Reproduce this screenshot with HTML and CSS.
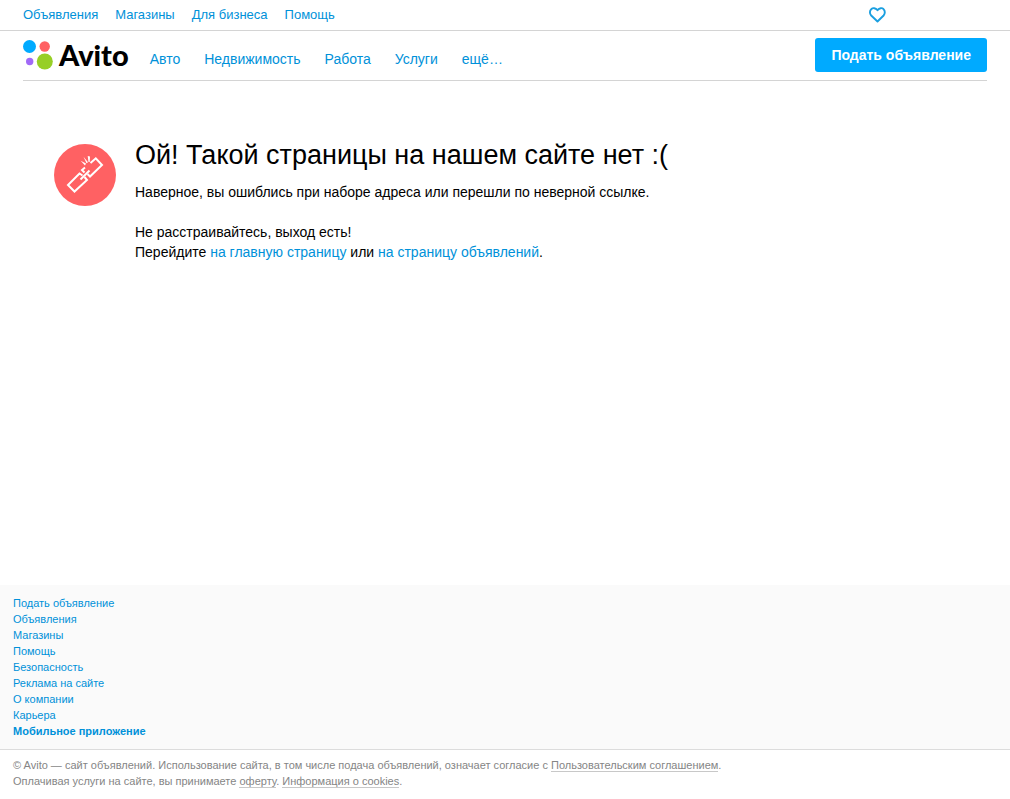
FILE: index.html
```html
<!DOCTYPE html>
<html lang="ru">
<head>
<meta charset="utf-8">
<meta name="viewport" content="width=device-width, initial-scale=1">
<title>Avito — страница не найдена</title>
<link rel="stylesheet" href="styles.css">
</head>
<body>
<header>
  <div class="topbar">
    <nav class="topbar-nav" aria-label="Сервисы">
      <a href="#">Объявления</a>
      <a href="#">Магазины</a>
      <a href="#">Для бизнеса</a>
      <a href="#">Помощь</a>
    </nav>
    <a class="favorites" href="#" aria-label="Избранное">
      <svg width="18" height="16" viewBox="0 0 18 16" aria-hidden="true"><path d="M9.500 14.500L3.200 8.500C1.500 6.700 1.500 3.700 3.200 2.200C4.900 .6 7.500 .8 9.500 3.200C11.500 .8 14.100 .6 15.600 2.200C17.200 3.700 17.200 6.700 15.600 8.500Z" fill="none" stroke="#1a9fe0" stroke-width="1.900" stroke-linejoin="round"/></svg>
    </a>
  </div>
  <div class="mainbar">
    <a class="logo" href="#">
      <svg width="31" height="31" viewBox="0 0 31 31" aria-hidden="true"><circle cx="6.500" cy="7.500" r="6.500" fill="#00aaff"/><circle cx="21.700" cy="7.500" r="5.200" fill="#ff6163"/><circle cx="6.700" cy="22.500" r="3.700" fill="#a169f7"/><circle cx="21.800" cy="22.500" r="8" fill="#97cf26"/></svg>
      <span>Avito</span>
    </a>
    <nav class="categories" aria-label="Категории">
      <a href="#">Авто</a>
      <a href="#">Недвижимость</a>
      <a href="#">Работа</a>
      <a href="#">Услуги</a>
      <a href="#">ещё…</a>
    </nav>
    <button class="post-button" type="button">Подать объявление</button>
  </div>
</header>
<main class="error">
  <svg class="error-icon" width="62" height="62" viewBox="0 0 62 62" aria-hidden="true"><circle cx="31" cy="31" r="31" fill="#ff6163"/><g fill="none" stroke="#fff" stroke-width="2"><path d="M28.500 31.500L25.500 29.500L14 41L20.500 47.500L33 36L30.500 33"/><path d="M30.500 28.500L28 26L31 23.500M36.500 19L41.800 14.300L48 21L36 32.500L33.500 30"/><path d="M26.500 35.500L35.500 26.500"/></g><path d="M26.700 16.700L32 19.500L31 21.500ZM29.500 12.800L34 18.200L32.500 19.300ZM33.700 12L36 12.400L35.700 18L34.500 18Z" fill="#fff"/></svg>
  <div class="error-text">
    <h1>Ой! Такой страницы на нашем сайте нет :(</h1>
    <p>Наверное, вы ошиблись при наборе адреса или перешли по неверной ссылке.</p>
    <p>Не расстраивайтесь, выход есть!<br>Перейдите <a href="#">на главную страницу</a> или <a href="#">на страницу объявлений</a>.</p>
  </div>
</main>
<footer>
  <ul class="footer-links">
    <li><a href="#">Подать объявление</a></li>
    <li><a href="#">Объявления</a></li>
    <li><a href="#">Магазины</a></li>
    <li><a href="#">Помощь</a></li>
    <li><a href="#">Безопасность</a></li>
    <li><a href="#">Реклама на сайте</a></li>
    <li><a href="#">О компании</a></li>
    <li><a href="#">Карьера</a></li>
    <li><a class="strong" href="#">Мобильное приложение</a></li>
  </ul>
  <p class="legal">© Avito — сайт объявлений. Использование сайта, в том числе подача объявлений, означает согласие с <a href="#">Пользовательским соглашением</a>.<br>Оплачивая услуги на сайте, вы принимаете <a href="#">оферту</a>. <a href="#">Информация о cookies</a>.</p>
</footer>
</body>
</html>
```
FILE: styles.css
```css
* { box-sizing: border-box; }
body {
  margin: 0;
  min-height: 100vh;
  display: flex;
  flex-direction: column;
  background: #fff;
  color: #000;
  font: 14px/20px "Liberation Sans", Arial, sans-serif;
}
a { color: #0091d9; text-decoration: none; }
a:hover { color: #ff6163; }
h1, p, ul { margin: 0; }

.topbar {
  display: flex;
  justify-content: space-between;
  align-items: center;
  height: 31px;
  padding: 0 124px 0 23px;
  border-bottom: 1px solid #d4d4d4;
  font-size: 13px;
}
.topbar-nav { display: flex; gap: 17px; }
.favorites { display: flex; }

.mainbar {
  display: flex;
  align-items: center;
  height: 50px;
  margin: 0 23px;
  padding-bottom: 2px;
  border-bottom: 1px solid #d4d4d4;
}
.logo {
  display: flex;
  align-items: center;
  gap: 5px;
  color: #000;
  font: 900 29px/30px Lato, sans-serif;
}
.categories { display: flex; gap: 24px; margin: 8px 0 0 21px; }
.post-button {
  height: 34px;
  margin-left: auto;
  padding: 0 16px;
  border: 0;
  border-radius: 3px;
  background: #00aaff;
  color: #fff;
  font: bold 14px/20px "Liberation Sans", Arial, sans-serif;
}

.error { display: flex; flex: 1; gap: 19px; padding: 57px 54px 40px; }
.error-icon { flex: none; margin-top: 6px; }
.error-text h1 { margin-bottom: 10px; font-weight: normal; font-size: 27px; line-height: 34px; }
.error-text p + p { margin-top: 20px; }

footer { font-size: 11px; line-height: 16px; }
.footer-links {
  padding: 10px 13px;
  border-bottom: 1px solid #dcdcdc;
  background: #fafafa;
  list-style: none;
}
.footer-links .strong { font-weight: bold; }
.legal { padding: 7px 13px 10px; color: #858585; }
.legal a { border-bottom: 1px solid #c8c8c8; color: inherit; }
```
